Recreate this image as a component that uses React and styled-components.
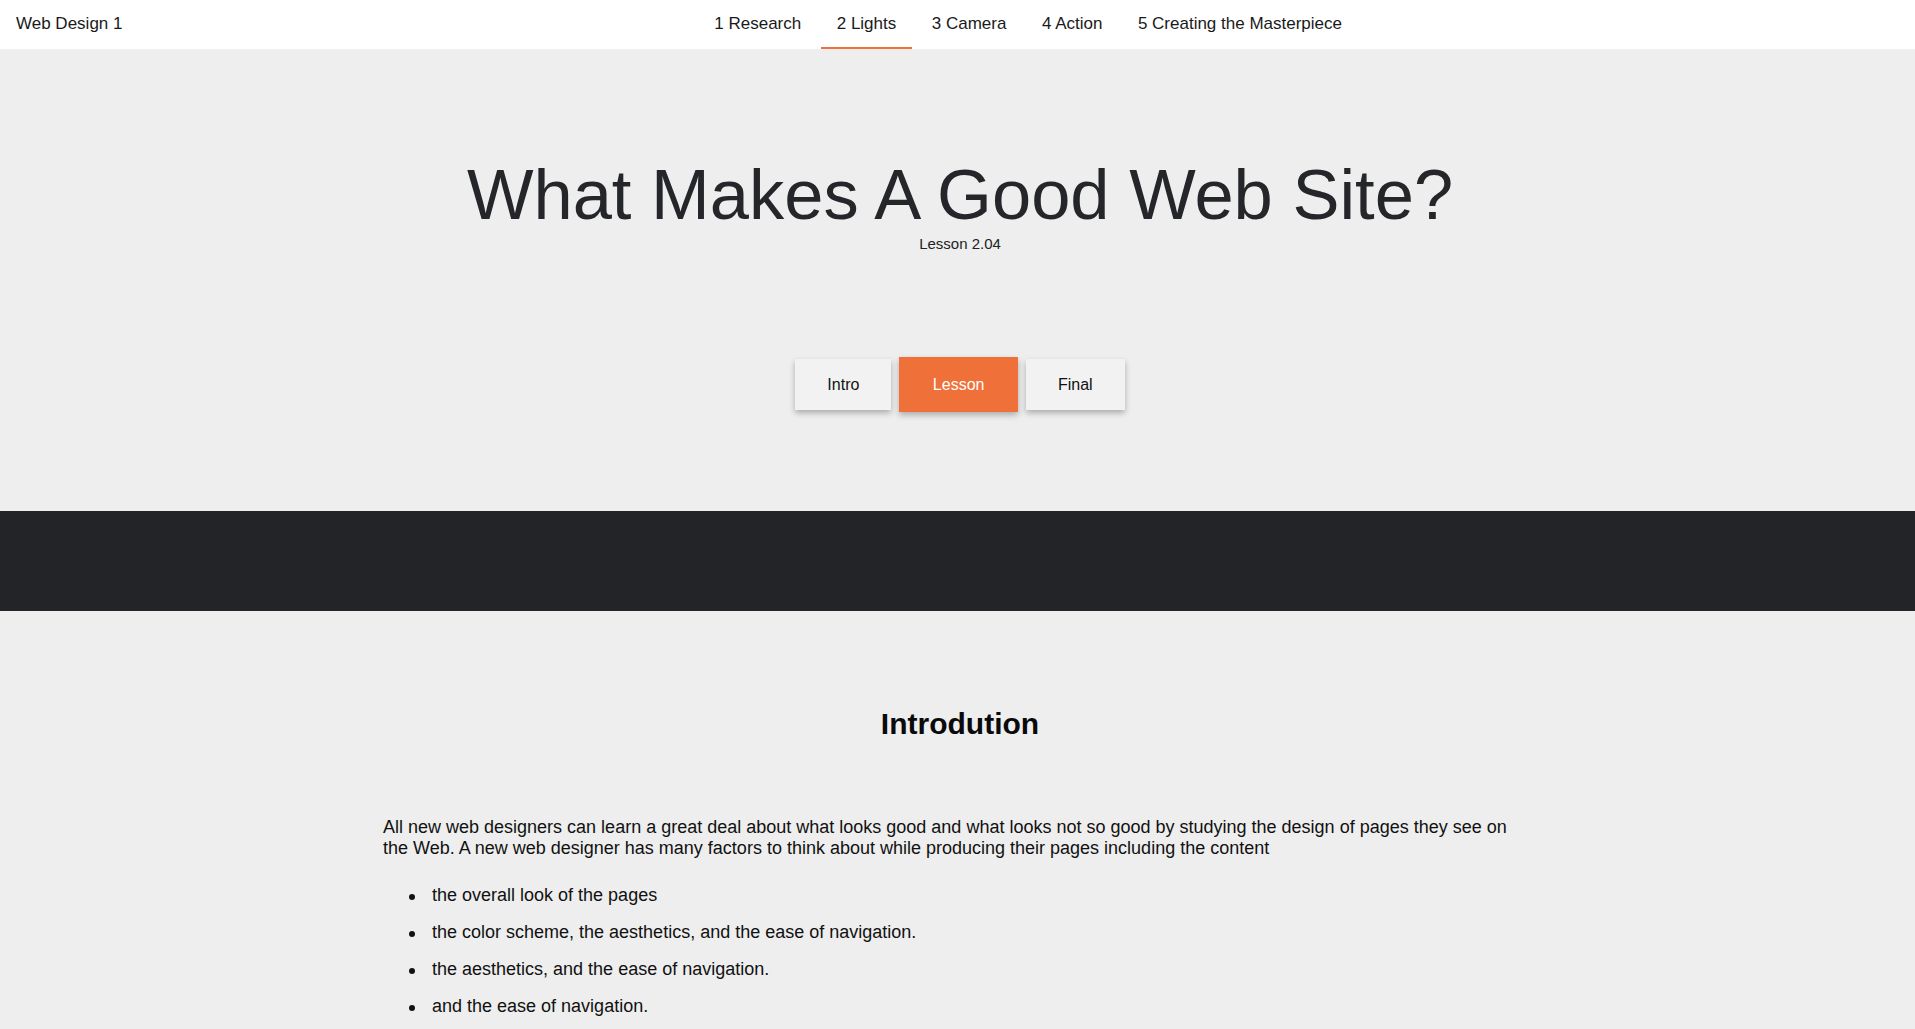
import React from "react";
import styled, { createGlobalStyle } from "styled-components";

const GlobalStyle = createGlobalStyle`
  html, body {
    margin: 0;
    padding: 0;
    background: #eeeeee;
    font-family: "Liberation Sans", Arial, sans-serif;
  }
`;

export default function App() {
  let tabs = ["1 Research", "2 Lights", "3 Camera", "4 Action", "5 Creating the Masterpiece"];
  let parts = ["Intro", "Lesson", "Final"];
  let points = [
    "the overall look of the pages",
    "the color scheme, the aesthetics, and the ease of navigation.",
    "the aesthetics, and the ease of navigation.",
    "and the ease of navigation.",
  ];

  return (
    <Page>
      <GlobalStyle />
      <Header>
        <Brand>Web Design 1</Brand>
        <Nav>
          {tabs.map((t, i) => (
            <NavLink key={i} active={i === 1}>
              {t}
            </NavLink>
          ))}
        </Nav>
      </Header>
      <Hero>
        <Title>What Makes A Good Web Site?</Title>
        <Subtitle>Lesson 2.04</Subtitle>
        <Buttons>
          {parts.map((p, i) => (
            <PartButton key={i} active={i === 1}>
              {p}
            </PartButton>
          ))}
        </Buttons>
      </Hero>
      <Band />
      <Content>
        <Heading>Introdution</Heading>
        <Text>
          All new web designers can learn a great deal about what looks good and
          what looks not so good by studying the design of pages they see on the
          Web. A new web designer has many factors to think about while
          producing their pages including the content
        </Text>
        <List>
          {points.map((p, i) => (
            <Item key={i}>{p}</Item>
          ))}
        </List>
      </Content>
    </Page>
  );
}

const Page = styled.div`
  width: 100%;
  color: #111;
`;

const Header = styled.header`
  display: flex;
  align-items: center;
  height: 49px;
  padding: 0 16px;
  background: #ffffff;
`;

const Brand = styled.div`
  font-size: 17px;
  color: #1a1a1a;
  padding-bottom: 2px;
`;

const Nav = styled.nav`
  display: flex;
  gap: 3.5px;
  height: 100%;
  margin-left: auto;
  margin-right: 541px;
`;

const NavLink = styled.a`
  display: block;
  padding: 0 16px;
  font-size: 17px;
  line-height: 46px;
  color: #1a1a1a;
  cursor: pointer;
  border-bottom: 2px solid ${(p) => (p.active ? "#f07039" : "transparent")};
  margin-top: 1px;
`;

const Hero = styled.section`
  display: flex;
  flex-direction: column;
  align-items: center;
  padding: 105px 0 99px 5px;
`;

const Title = styled.h1`
  margin: 0;
  font-size: 70.5px;
  font-weight: 400;
  line-height: 1.15;
  color: #252629;
`;

const Subtitle = styled.div`
  font-size: 15px;
  line-height: 17px;
  color: #222;
`;

const Buttons = styled.div`
  display: flex;
  align-items: center;
  gap: 8px;
  margin-top: 105px;
  height: 55px;
`;

const PartButton = styled.button`
  border: none;
  font-family: "Liberation Sans", Arial, sans-serif;
  font-size: 16px;
  cursor: pointer;
  padding: 0 ${(p) => (p.active ? "33.5px" : "32px")};
  height: ${(p) => (p.active ? "55px" : "51px")};
  background: ${(p) => (p.active ? "#f07039" : "#f2f2f2")};
  color: ${(p) => (p.active ? "#ffffff" : "#111")};
  box-shadow: 0 3px 6px rgba(0, 0, 0, 0.28);
`;

const Band = styled.div`
  height: 100px;
  background: #232428;
`;

const Content = styled.section`
  width: 60%;
  margin: 0 auto;
  padding-top: 96px;
`;

const Heading = styled.h2`
  margin: 0;
  padding-left: 5px;
  text-align: center;
  font-size: 30px;
  font-weight: 700;
  line-height: normal;
  color: #0a0a0a;
`;

const Text = styled.p`
  margin: 76px 0 0;
  font-size: 18px;
  line-height: normal;
`;

const List = styled.ul`
  margin: 26px 0 0;
  padding-left: 26px;
  list-style: none;
  display: flex;
  flex-direction: column;
  gap: 16px;
`;

const Item = styled.li`
  display: flex;
  font-size: 18px;
  line-height: normal;

  &::before {
    content: "";
    flex: none;
    width: 6px;
    height: 6px;
    margin: 9px 17px 0 0;
    border-radius: 50%;
    background: #111;
  }
`;
